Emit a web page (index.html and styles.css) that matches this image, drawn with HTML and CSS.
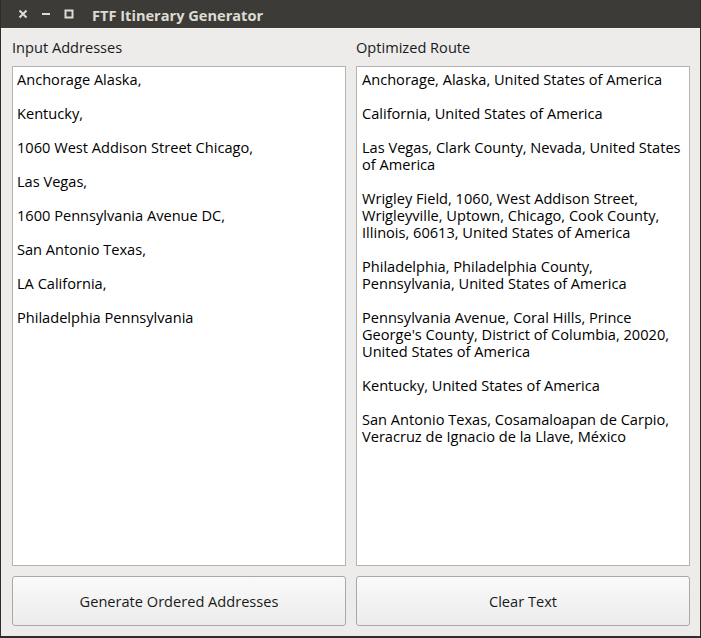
FILE: index.html
```html
<!DOCTYPE html>
<html>
<head>
<meta charset="utf-8">
<link rel="stylesheet" href="styles.css">
</head>
<body>
<div class="window">
  <div class="titlebar">
    <div class="controls">
      <svg class="ctl" width="12" height="12" viewBox="0 0 12 12"><path d="M2.5 2.5 L9.5 9.5 M9.5 2.5 L2.5 9.5" stroke="#dfdbd2" stroke-width="2" fill="none"/></svg>
      <svg class="ctl" width="12" height="12" viewBox="0 0 12 12"><path d="M2 6 H10" stroke="#dfdbd2" stroke-width="2" fill="none"/></svg>
      <svg class="ctl" width="12" height="12" viewBox="0 0 12 12"><rect x="2.5" y="2.5" width="7" height="7" stroke="#dfdbd2" stroke-width="2" fill="none"/></svg>
    </div>
    <div class="title">FTF Itinerary Generator</div>
  </div>
  <div class="content">
    <div class="label">Input Addresses</div>
    <div class="label">Optimized Route</div>
    <div class="textbox">
      <p>Anchorage Alaska,</p>
      <p>Kentucky,</p>
      <p>1060 West Addison Street Chicago,</p>
      <p>Las Vegas,</p>
      <p>1600 Pennsylvania Avenue DC,</p>
      <p>San Antonio Texas,</p>
      <p>LA California,</p>
      <p>Philadelphia Pennsylvania</p>
    </div>
    <div class="textbox">
      <p>Anchorage, Alaska, United States of America</p>
      <p>California, United States of America</p>
      <p>Las Vegas, Clark County, Nevada, United States of America</p>
      <p>Wrigley Field, 1060, West Addison Street, Wrigleyville, Uptown, Chicago, Cook County, Illinois, 60613, United States of America</p>
      <p>Philadelphia, Philadelphia County, Pennsylvania, United States of America</p>
      <p>Pennsylvania Avenue, Coral Hills, Prince George's County, District of Columbia, 20020, United States of America</p>
      <p>Kentucky, United States of America</p>
      <p>San Antonio Texas, Cosamaloapan de Carpio, Veracruz de Ignacio de la Llave, México</p>
    </div>
    <button class="btn">Generate Ordered Addresses</button>
    <button class="btn">Clear Text</button>
  </div>
</div>
</body>
</html>
```
FILE: styles.css
```css
* { box-sizing: border-box; }
html, body { margin: 0; padding: 0; }
body {
  background: #2d2d2b;
  font-family: "Open Sans", "DejaVu Sans", sans-serif;
  font-size: 14.6px;
  color: #000;
}
.window {
  width: 701px;
  height: 638px;
  border-left: 1px solid #2d2d2b;
  border-right: 1px solid #2d2d2b;
  border-bottom: 2px solid #2d2d2b;
  display: flex;
  flex-direction: column;
  background: #edecea;
}
.titlebar {
  height: 28px;
  background: #3c3b37;
  display: flex;
  align-items: center;
  flex-shrink: 0;
}
.controls {
  display: flex;
  gap: 11px;
  padding-left: 16px;
  align-items: center;
}
.ctl { display: block; }
.title {
  margin-left: 17px;
  color: #dfdbd2;
  font-weight: bold;
  font-size: 14.6px;
  padding-top: 1px;
}
.content {
  flex: 1;
  display: grid;
  grid-template-columns: 334px 334px;
  grid-template-rows: 37px 500px 60px;
  column-gap: 10px;
  padding: 0 10px 0 11px;
  border-top: 1px solid #f6f5f4;
}
.label {
  align-self: start;
  padding-top: 10px;
  line-height: 17px;
  color: #1a1a1a;
}
.textbox {
  background: #fff;
  border: 1px solid #b6b4b2;
  padding: 4px 5px 4px 4px;
  line-height: 17px;
  overflow: hidden;
}
.textbox + .textbox { padding-left: 5px; }
.textbox p {
  margin: 0 0 17px 0;
}
.btn {
  font: inherit;
  color: #1a1a1a;
  margin-top: 10px;
  height: 50px;
  border: 1px solid #aaa8a6;
  border-radius: 3px;
  background: linear-gradient(#fafafa, #ececec);
  padding: 0;
}
```
